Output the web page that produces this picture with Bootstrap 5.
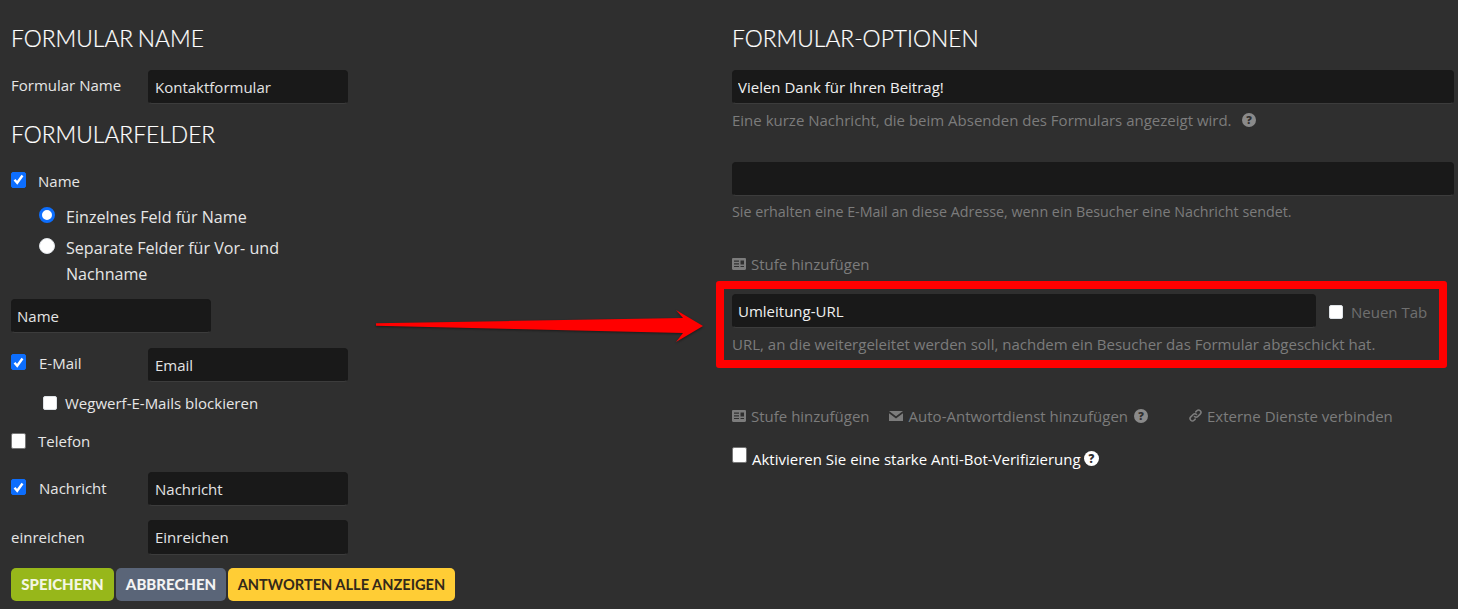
<!DOCTYPE html>
<html lang="de">
<head>
  <meta charset="utf-8">
  <title>Formular</title>
  <link href="https://cdn.jsdelivr.net/npm/bootstrap@5.3.3/dist/css/bootstrap.min.css" rel="stylesheet">
  <style>
    body { background: #2f2f2f; color: #e6e6e6; font-family: "Open Sans", sans-serif; font-size: 15px; overflow: hidden; height: 609px; position: relative; }
    .left-pane { width: 732px; padding: 0 0 0 11px; flex: none; }
    .right-pane { width: 722px; flex: none; }
    .sec-title { font-family: Lato, sans-serif; font-weight: 300; font-size: 22.8px; word-spacing: -1.5px; line-height: 28px; color: #fff; margin: 0; text-transform: uppercase; -webkit-text-stroke: 0.2px #fff; }
    .dark-input.form-control { background: #191919; border: 1px solid #191919; border-bottom-color: #3c3c3c; border-radius: 4px; color: #e4e4e4; height: 34px; padding: 0 6px 0; font-size: 15px; box-shadow: none; }
    .w-200 { width: 200px; }
    .lbl-col { width: 137px; flex: none; }
    .form-check-input.big-box { width: 15px; height: 16px; margin: 0; border: 1px solid #767676; border-radius: 2px; background-color: #fff; flex: none; }
    .form-check-input.big-box:checked { background-color: #0d6efd; border-color: #0d6efd; background-size: 13px; background-image: url("data:image/svg+xml,%3csvg xmlns='http://www.w3.org/2000/svg' viewBox='0 0 13 13'%3e%3cpath fill='none' stroke='%23fff' stroke-width='2.400' d='M2.500 6.800 5.200 9.800 10.500 2.500'/%3e%3c/svg%3e"); }
    .form-check-input.small-box { width: 14px; height: 14px; margin: 0; border-radius: 2px; flex: none; }
    .form-check-input.dot { width: 16px; height: 16px; margin: 0; flex: none; }
    .form-check-input.dot:checked { background-color: #fff; border: 3px solid #0d6efd; background-image: none; }
    .radio-text { font-size: 16.1px; line-height: 26px; color: #e6e6e6; }
    .help-line { color: #7c7c7c; font-size: 15px; line-height: 20px; }
    .act-link { color: #7c7c7c; font-size: 15px; line-height: 20px; display: inline-flex; align-items: center; gap: 5px; white-space: nowrap; }
    .act-link svg, .help-line svg, .bot-line svg { flex: none; }
    .bot-line { color: #fff; font-size: 15px; line-height: 20px; }
    .save-btn { font-family: Lato, sans-serif; font-weight: 900; font-size: 15px; height: 33px; line-height: 33px; padding: 0; border-radius: 5px; border: 0; text-transform: uppercase; }
    .btn-save { width: 103px; background: #97b71a; color: #f4f6e4; }
    .btn-abort { width: 110px; background: #5a6578; color: #f3f3f3; }
    .btn-answers { width: 227px; background: #ffcd35; color: #33291a; font-weight: 700; font-size: 14.600px; }
    .red-frame { position: absolute; left: 716px; top: 281px; width: 731px; height: 87px; border: 8px solid #ff0000; border-radius: 3px; pointer-events: none; }
    .red-arrow { position: absolute; left: 370px; top: 305px; filter: drop-shadow(0 1px 1px rgba(0,0,0,.45)); }
  </style>
</head>
<body>
  <div class="d-flex">
    <div class="left-pane">
      <h2 class="sec-title" style="margin-top:24px">Formular Name</h2>
      <div class="d-flex align-items-center" style="margin-top:18px">
        <label class="lbl-col" style="margin-top:-4px">Formular Name</label>
        <input class="form-control dark-input w-200" value="Kontaktformular">
      </div>
      <h2 class="sec-title" style="margin-top:16px">Formularfelder</h2>

      <div class="d-flex align-items-center" style="margin-top:23px;height:20px">
        <input class="form-check-input big-box" type="checkbox" checked style="margin-top:-3px">
        <span style="margin-left:12px">Name</span>
      </div>
      <div class="d-flex align-items-start" style="margin:13px 0 0 28px">
        <input class="form-check-input dot" type="radio" name="nm" checked style="margin-top:3px">
        <span class="radio-text" style="margin-left:11px">Einzelnes Feld für Name</span>
      </div>
      <div class="d-flex align-items-start" style="margin:5px 0 0 28px;width:300px">
        <input class="form-check-input dot" type="radio" name="nm" style="margin-top:3px">
        <span class="radio-text" style="margin-left:11px">Separate Felder für Vor- und Nachname</span>
      </div>
      <input class="form-control dark-input w-200" value="Name" style="margin-top:12px;padding-left:5px">

      <div class="d-flex align-items-center" style="margin-top:15px">
        <input class="form-check-input big-box" type="checkbox" checked style="margin-top:-6px">
        <label style="width:109px;margin-left:13px;margin-top:-3px">E-Mail</label>
        <input class="form-control dark-input w-200" value="Email">
      </div>
      <div class="d-flex align-items-center" style="margin:11px 0 0 32px;height:20px">
        <input class="form-check-input small-box" type="checkbox">
        <span style="margin-left:8px">Wegwerf-E-Mails blockieren</span>
      </div>
      <div class="d-flex align-items-center" style="margin-top:18px;height:20px">
        <input class="form-check-input big-box" type="checkbox">
        <span style="margin-left:12px">Telefon</span>
      </div>
      <div class="d-flex align-items-center" style="margin-top:21px">
        <input class="form-check-input big-box" type="checkbox" checked style="margin-top:-4px">
        <label style="width:109px;margin-left:13px;margin-top:-1px">Nachricht</label>
        <input class="form-control dark-input w-200" value="Nachricht">
      </div>
      <div class="d-flex align-items-center" style="margin-top:14px">
        <label class="lbl-col" style="margin-top:-1px">einreichen</label>
        <input class="form-control dark-input w-200" value="Einreichen" style="height:35px;padding-bottom:1px">
      </div>
      <div class="d-flex" style="margin-top:13px;gap:2px">
        <button class="btn save-btn btn-save">Speichern</button>
        <button class="btn save-btn btn-abort">Abbrechen</button>
        <button class="btn save-btn btn-answers">Antworten alle anzeigen</button>
      </div>
    </div>

    <div class="right-pane">
      <h2 class="sec-title" style="margin-top:24px">Formular-Optionen</h2>
      <input class="form-control dark-input" value="Vielen Dank für Ihren Beitrag!" style="margin-top:18px;padding-left:5px;color:#f0f0f0">
      <div class="help-line d-flex align-items-center" style="margin-top:6px">
        Eine kurze Nachricht, die beim Absenden des Formulars angezeigt wird.
        <svg style="margin-left:10px" width="14" height="14" viewBox="0 0 14 14"><circle cx="7" cy="7" r="7" fill="#8a8a8a"/><text x="7" y="11" text-anchor="middle" font-family="Open Sans" font-weight="800" font-size="11" fill="#2f2f2f">?</text></svg>
      </div>
      <input class="form-control dark-input" style="margin-top:32px">
      <div class="help-line" style="margin-top:6px;font-size:14.300px">Sie erhalten eine E-Mail an diese Adresse, wenn ein Besucher eine Nachricht sendet.</div>
      <div style="margin-top:31px">
        <span class="act-link"><svg width="14" height="12" viewBox="0 0 14 12"><path fill="#7c7c7c" fill-rule="evenodd" d="M0 1.2C0 .5.5 0 1.2 0h11.6c.7 0 1.2.5 1.2 1.2v9.6c0 .7-.5 1.2-1.2 1.2H1.2C.5 12 0 11.500 0 10.800zM2 2.500v1.200h5V2.500zM2 5.200v1.200h5V5.200zM2 7.900v1.200h5V7.900zM8.500 2.500v4h3.500v-4zM8.500 7.900v1.200H12V7.900z"/></svg>Stufe hinzufügen</span>
      </div>
      <div class="d-flex align-items-center" style="margin-top:18px">
        <input class="form-control dark-input" value="Umleitung-URL" style="width:584px;padding-left:5px;color:#f0f0f0">
        <input class="form-check-input small-box" type="checkbox" style="margin-left:13px;margin-top:2px">
        <span style="margin-left:8px;color:#6f6f6f;margin-top:4px">Neuen Tab</span>
      </div>
      <div class="help-line" style="margin-top:6px">URL, an die weitergeleitet werden soll, nachdem ein Besucher das Formular abgeschickt hat.</div>
      <div class="d-flex align-items-center" style="margin-top:52px">
        <span class="act-link"><svg width="14" height="12" viewBox="0 0 14 12"><path fill="#7c7c7c" fill-rule="evenodd" d="M0 1.2C0 .5.5 0 1.2 0h11.6c.7 0 1.2.5 1.2 1.2v9.6c0 .7-.5 1.2-1.2 1.2H1.2C.5 12 0 11.500 0 10.800zM2 2.500v1.200h5V2.500zM2 5.200v1.200h5V5.200zM2 7.900v1.200h5V7.900zM8.500 2.500v4h3.500v-4zM8.500 7.900v1.200H12V7.900z"/></svg>Stufe hinzufügen</span>
        <span class="act-link" style="margin-left:19px;gap:6px"><svg width="14" height="10" viewBox="0 0 14 10"><path fill="#7c7c7c" d="M0 0h14L7 5.200zM0 2.200l7 5.200 7-5.200V10H0z"/></svg>Auto-Antwortdienst hinzufügen
          <svg width="14" height="14" viewBox="0 0 14 14"><circle cx="7" cy="7" r="7" fill="#8a8a8a"/><text x="7" y="11" text-anchor="middle" font-family="Open Sans" font-weight="800" font-size="11" fill="#2f2f2f">?</text></svg></span>
        <span class="act-link" style="margin-left:41px"><svg width="13" height="13" viewBox="0 0 13 13" fill="none" stroke="#7c7c7c" stroke-width="1.600" stroke-linecap="round"><path d="M5.500 7.500a2.300 2.300 0 0 0 3.300 0l2.400-2.400a2.300 2.300 0 0 0-3.300-3.300L6.800 2.900"/><path d="M7.500 5.500a2.300 2.300 0 0 0-3.300 0L1.800 7.900a2.300 2.300 0 0 0 3.300 3.300l1.100-1.100"/></svg>Externe Dienste verbinden</span>
      </div>
      <div class="bot-line d-flex align-items-start" style="margin-top:21px">
        <input class="form-check-input big-box" type="checkbox">
        <span style="margin-left:5px;margin-top:2px">Aktivieren Sie eine starke Anti-Bot-Verifizierung</span>
        <svg style="margin:4px 0 0 3px" width="15" height="15" viewBox="0 0 15 15"><circle cx="7.500" cy="7.500" r="7.500" fill="#fff"/><text x="7.500" y="11.500" text-anchor="middle" font-family="Open Sans" font-weight="800" font-size="11.500" fill="#2f2f2f">?</text></svg>
      </div>
    </div>
  </div>

  <div class="red-frame"></div>
  <svg class="red-arrow" width="345" height="42" viewBox="0 0 345 42"><path fill="#ff0000" d="M6 18.300 L313 13 L306 5 L333 21 L306 37 L313 28 L6 20.800 Z"/></svg>
  <script src="https://cdn.jsdelivr.net/npm/bootstrap@5.3.3/dist/js/bootstrap.bundle.min.js"></script>
</body>
</html>
